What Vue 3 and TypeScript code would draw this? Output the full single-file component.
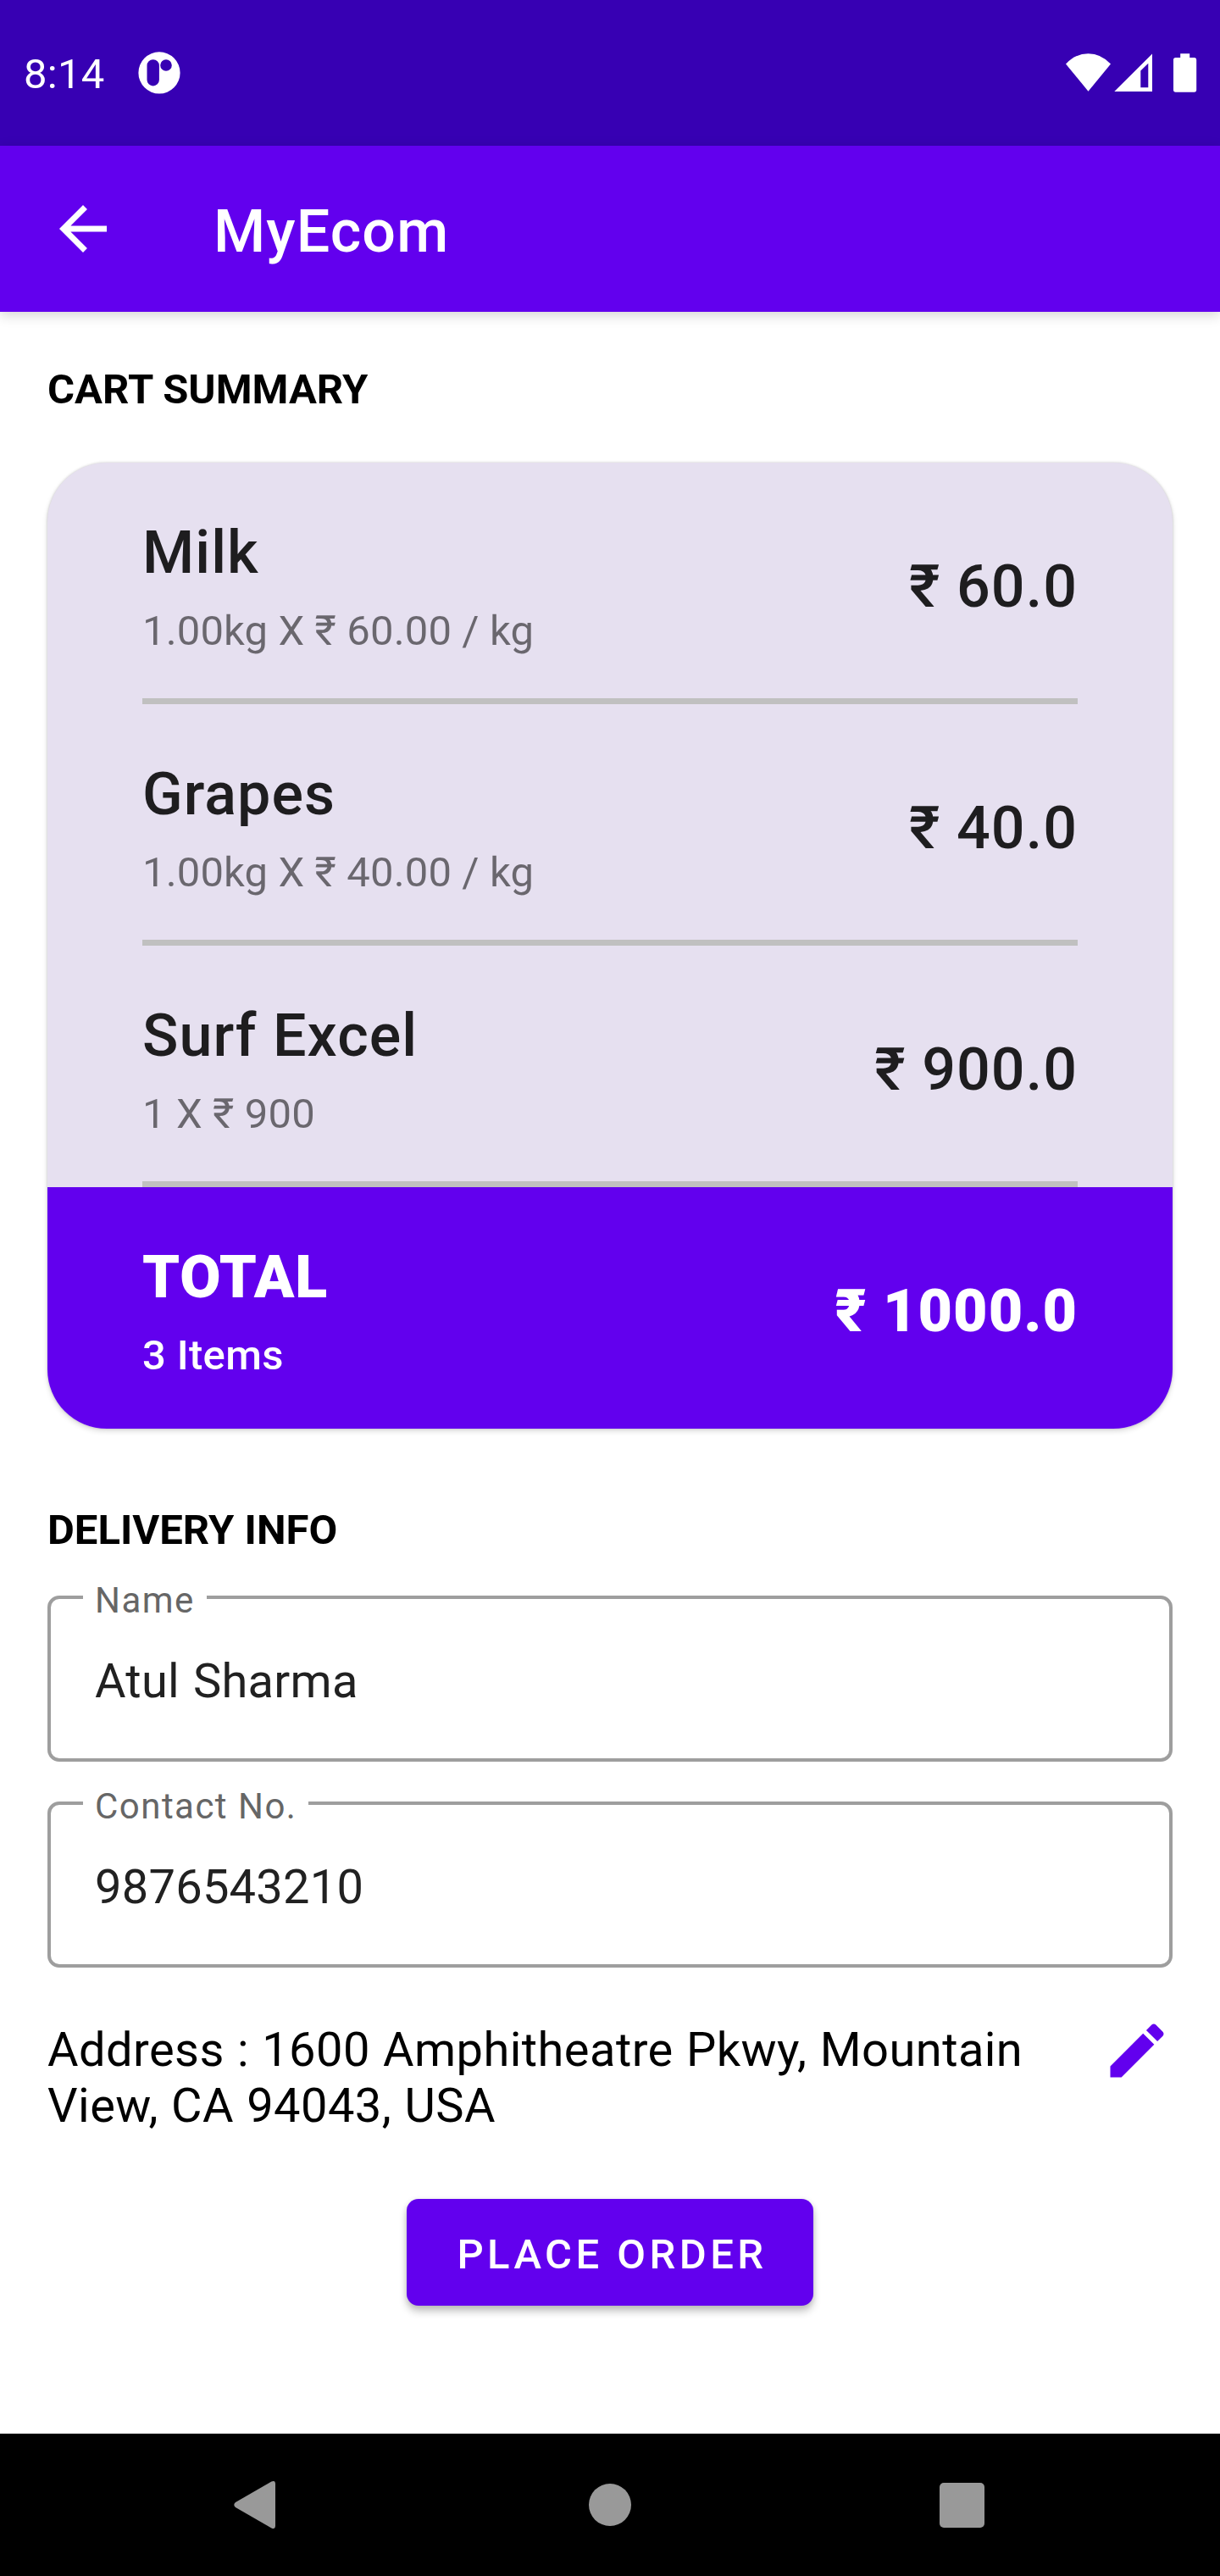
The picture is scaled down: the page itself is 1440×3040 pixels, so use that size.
<script setup lang="ts">
interface CartItem {
  name: string
  detail: string
  price: string
}

interface Field {
  label: string
  value: string
}

const items: CartItem[] = [
  { name: 'Milk', detail: '1.00kg X ₹ 60.00 / kg', price: '₹ 60.0' },
  { name: 'Grapes', detail: '1.00kg X ₹ 40.00 / kg', price: '₹ 40.0' },
  { name: 'Surf Excel', detail: '1 X ₹ 900', price: '₹ 900.0' },
]

const fields: Field[] = [
  { label: 'Name', value: 'Atul Sharma' },
  { label: 'Contact No.', value: '9876543210' },
]
</script>

<template>
  <div class="screen">
    <div class="status-bar">
      <span class="clock">8:14</span>
      <svg class="app-badge" viewBox="0 0 50 50" width="50" height="50">
        <path
          fill="#fff"
          fill-rule="evenodd"
          d="M25 .3a24.6 24.6 0 1 0 0 49.2a24.6 24.6 0 1 0 0-49.2zM17.7 9.2a7.2 7.2 0 0 1 7.2 7.2v16.8a7.2 7.2 0 0 1-14.4 0V16.4a7.2 7.2 0 0 1 7.2-7.2zM33 9.2a6.8 6.8 0 1 1 0 13.6a6.8 6.8 0 1 1 0-13.6z"
        />
      </svg>
      <svg class="indicators" viewBox="0 0 156 48" width="156" height="48" fill="#fff">
        <path d="M0 13.5Q11.5 1.2 26.5 1.2T53 13.5L26.5 45.7z" />
        <path fill-rule="evenodd" d="M102 1.5V46H57.3zM97.3 12.7L88.3 21.5V41.2H97.3z" />
        <path d="M135.2 1.2H146.2V6H151.5a2.7 2.7 0 0 1 2.7 2.7V44a2.7 2.7 0 0 1-2.7 2.7H129.7a2.7 2.7 0 0 1-2.7-2.7V8.7a2.7 2.7 0 0 1 2.7-2.7H135.2z" />
      </svg>
    </div>

    <header class="app-bar">
      <svg viewBox="0 0 24 24" width="84" height="84" fill="#fff">
        <path d="M20 11H7.83l5.59-5.59L12 4l-8 8 8 8 1.41-1.41L7.83 13H20v-2z" />
      </svg>
      <h1>MyEcom</h1>
    </header>

    <main class="content">
      <h2>CART SUMMARY</h2>
      <section class="card">
        <div v-for="item in items" :key="item.name" class="row">
          <div>
            <div class="name">{{ item.name }}</div>
            <div class="detail">{{ item.detail }}</div>
          </div>
          <div class="price">{{ item.price }}</div>
        </div>
        <div class="row total">
          <div>
            <div class="name">TOTAL</div>
            <div class="detail">3 Items</div>
          </div>
          <div class="price">₹ 1000.0</div>
        </div>
      </section>

      <h2 class="delivery-title">DELIVERY INFO</h2>
      <div class="fields">
        <div v-for="field in fields" :key="field.label" class="field">
          <span class="label">{{ field.label }}</span>
          <span class="value">{{ field.value }}</span>
        </div>
      </div>

      <div class="address">
        <p>Address : 1600 Amphitheatre Pkwy, Mountain View, CA 94043, USA</p>
        <svg viewBox="0 0 24 24" width="84" height="84" fill="#6200ee">
          <path d="M3 17.25V21h3.75L17.81 9.94l-3.75-3.75L3 17.25zM20.71 7.04c.39-.39.39-1.02 0-1.41l-2.34-2.34c-.39-.39-1.02-.39-1.41 0l-1.83 1.83 3.75 3.75 1.83-1.83z" />
        </svg>
      </div>

      <button class="order" type="button">PLACE ORDER</button>
    </main>

    <nav class="nav-bar">
      <svg viewBox="0 0 50 56" width="50" height="56" fill="#999">
        <path d="M44.5.6Q49-1.3 49 3.5V52.5Q49 57.3 44.5 55.4L2 31Q-1.5 28 2 25z" />
      </svg>
      <span class="home"></span>
      <span class="recent"></span>
    </nav>
  </div>
</template>

<style>
body {
  margin: 0;
  background: #fff;
}
</style>

<style scoped>
.screen {
  width: 1440px;
  height: 3040px;
  display: flex;
  flex-direction: column;
  overflow: hidden;
  background: #fff;
  color: #000;
  font-family: Roboto, "Noto Sans", sans-serif;
}

.status-bar {
  box-sizing: border-box;
  height: 172px;
  padding: 0 26px 0 28px;
  display: flex;
  align-items: center;
  background: #3700b3;
}

.clock {
  color: #fff;
  font-size: 49px;
  line-height: 58px;
  letter-spacing: 0.3px;
  margin-top: 4px;
}

.app-badge {
  margin-left: 39px;
}

.indicators {
  margin-left: auto;
}

.app-bar {
  position: relative;
  box-sizing: border-box;
  height: 196px;
  padding: 0 56px;
  display: flex;
  align-items: center;
  gap: 112px;
  background: #6200ee;
  box-shadow: 0 4px 14px rgba(0, 0, 0, 0.17);
}

h1 {
  margin: 6px 0 0;
  color: #fff;
  font-size: 70px;
  line-height: 82px;
  font-weight: 500;
  letter-spacing: 1.1px;
}

.content {
  flex: 1;
  display: flex;
  flex-direction: column;
  padding: 63px 56px 0;
}

h2 {
  margin: 0;
  font-size: 49px;
  line-height: 58px;
  font-weight: 700;
}

.card {
  margin-top: 57px;
  border-radius: 70px;
  background: #e6e0f0;
  overflow: hidden;
  box-shadow: 0 0 3px rgba(0, 0, 0, 0.18), 0 3px 6px rgba(0, 0, 0, 0.14);
}

.row {
  box-sizing: border-box;
  height: 285px;
  margin: 0 112px;
  padding: 65px 0 50px;
  border-bottom: 7px solid #c0c0c0;
  display: flex;
  align-items: flex-start;
  justify-content: space-between;
}

.name,
.price {
  color: rgba(0, 0, 0, 0.87);
  font-size: 70px;
  line-height: 82px;
  font-weight: 500;
  letter-spacing: 1.05px;
}

.price {
  margin-top: 40px;
}

.detail {
  margin-top: 23px;
  color: rgba(0, 0, 0, 0.54);
  font-size: 49px;
  line-height: 58px;
  letter-spacing: 0.13px;
}

.total {
  margin: 0;
  padding: 65px 112px 57px;
  border-bottom: 0;
  background: #6200ee;
}

.total .name,
.total .price {
  color: #fff;
  font-weight: 900;
  letter-spacing: 1px;
}

.total .detail {
  color: #fff;
  font-weight: 500;
  letter-spacing: 0.35px;
}

.delivery-title {
  margin-top: 91px;
}

.fields {
  margin-top: 48px;
  display: flex;
  flex-direction: column;
  gap: 47px;
}

.field {
  position: relative;
  box-sizing: border-box;
  height: 196px;
  padding: 64px 52px;
  border: 4px solid #9e9e9e;
  border-radius: 14px;
}

.label {
  position: absolute;
  top: -23px;
  left: 38px;
  padding: 0 14px;
  background: #fff;
  color: #666;
  font-size: 42px;
  line-height: 50px;
  letter-spacing: 0.035em;
}

.value {
  display: block;
  color: #212121;
  font-size: 56px;
  line-height: 66px;
  letter-spacing: 0.25px;
  word-spacing: 2px;
}

.address {
  margin-top: 56px;
  display: flex;
  justify-content: space-between;
}

.address p {
  margin: 8px 0 0;
  width: 1200px;
  font-size: 56px;
  line-height: 66px;
  letter-spacing: 0.44px;
  word-spacing: 0.9px;
}

.order {
  align-self: center;
  margin-top: 77px;
  width: 480px;
  height: 126px;
  padding: 4px 0 0 5px;
  border: 0;
  border-radius: 14px;
  background: #6200ee;
  color: #fff;
  font-family: inherit;
  font-size: 49px;
  font-weight: 500;
  letter-spacing: 4.45px;
  white-space: nowrap;
  box-shadow: 0 7px 10px rgba(0, 0, 0, 0.22), 0 1px 6px rgba(0, 0, 0, 0.12);
}

.nav-bar {
  box-sizing: border-box;
  height: 168px;
  padding: 0 278px 0 276px;
  display: flex;
  align-items: center;
  justify-content: space-between;
  background: #000;
}

.home {
  width: 50px;
  height: 50px;
  margin-left: 5px;
  border-radius: 50%;
  background: #999;
}

.recent {
  width: 53px;
  height: 53px;
  border-radius: 5px;
  background: #999;
}
</style>
